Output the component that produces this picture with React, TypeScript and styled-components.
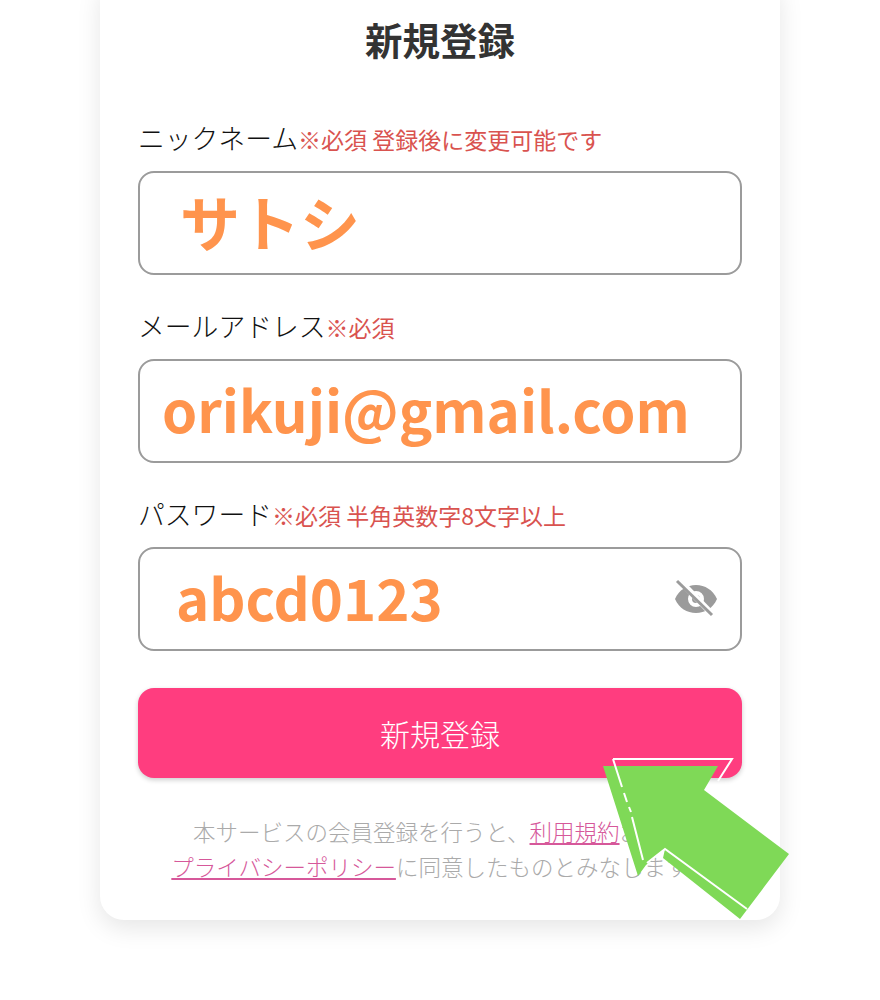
import React from 'react';
import styled, { createGlobalStyle } from 'styled-components';

const FONT = `"Noto Sans CJK JP", "Noto Sans", sans-serif`;

const fields = [
  { label: 'ニックネーム', note: '※必須 登録後に変更可能です', value: 'サトシ', inset: 40, size: 60 },
  { label: 'メールアドレス', note: '※必須', value: 'orikuji@gmail.com', inset: 22, size: 56.3 },
  { label: 'パスワード', note: '※必須 半角英数字8文字以上', value: 'abcd0123', inset: 36, size: 56.3, secret: true }
];

export default function App() {
  return (
    <Page>
      <GlobalStyle />
      <Card>
        <Title>新規登録</Title>
        <Form>
          {fields.map((field) => (
            <Field key={field.label}>
              <Label>
                {field.label}
                <Note>{field.note}</Note>
              </Label>
              <InputBox>
                <Value $inset={field.inset} $size={field.size}>{field.value}</Value>
                {field.secret && <EyeOff />}
              </InputBox>
            </Field>
          ))}
          <Submit type="button">新規登録</Submit>
        </Form>
        <Terms>
          本サービスの会員登録を行うと、<TermsLink>利用規約</TermsLink>および
          <br />
          <TermsLink>プライバシーポリシー</TermsLink>に同意したものとみなします。
        </Terms>
      </Card>
      <Arrow />
    </Page>
  );
}

function EyeOff() {
  return (
    <EyeIcon viewBox="0 0 44 40" aria-hidden="true">
      <path
        fill="#9b9b9b"
        fillRule="evenodd"
        d="M1 20C5 11 13 6 22 6s17 5 21 14c-4 9-12 14-21 14S5 29 1 20Zm21-8a8 8 0 1 0 0 16 8 8 0 0 0 0-16Z"
      />
      <circle cx="22" cy="20" r="4" fill="#9b9b9b" />
      <path stroke="#fff" strokeWidth="6" d="M5 1l36 37" />
      <path stroke="#9b9b9b" strokeWidth="3" d="M3 2l35 34" />
    </EyeIcon>
  );
}

// 資料の説明用に重ねた矢印
function Arrow() {
  return (
    <ArrowIcon viewBox="0 0 880 1000" aria-hidden="true">
      <polygon
        fill="#7fd957"
        points="603,766 718,766 704,790 789,854 740,919 663,858 665,849 646,865 638,876"
      />
      <path
        fill="none"
        stroke="#fff"
        strokeWidth="2"
        d="M613 759H732L718 781M613 759L622 787M624 793L627 802M629 807L631 812M632 817L643 860M647 863L665 849L747 909"
      />
    </ArrowIcon>
  );
}

const GlobalStyle = createGlobalStyle`
  html, body {
    margin: 0;
    background: #fff;
  }
`;

const Page = styled.div`
  position: relative;
  height: 1000px;
  overflow: hidden;
  font-family: ${FONT};
`;

const Card = styled.section`
  box-sizing: border-box;
  width: 680px;
  height: 944px;
  margin: -24px auto 0;
  padding: 36px 38px 0;
  background: #fff;
  border-radius: 24px;
  box-shadow: 0 8px 24px rgba(0, 0, 0, 0.1);
`;

const Title = styled.h1`
  margin: 0 0 50px;
  height: 54px;
  font-size: 37.5px;
  line-height: 54px;
  font-weight: 700;
  text-align: center;
  color: #333;
`;

const Form = styled.div`
  display: flex;
  flex-direction: column;
  gap: 29px;
`;

const Field = styled.div`
  display: flex;
  flex-direction: column;
  gap: 12px;
`;

const Label = styled.div`
  height: 43px;
  font-size: 26.8px;
  font-weight: 300;
  line-height: 43px;
  color: #111;
  white-space: nowrap;
`;

const Note = styled.span`
  font-size: 23px;
  font-weight: 400;
  color: #d9534f;
`;

const InputBox = styled.div`
  box-sizing: border-box;
  display: flex;
  align-items: center;
  justify-content: space-between;
  height: 104px;
  padding-right: 22px;
  border: 2px solid #9b9b9b;
  border-radius: 16px;
`;

const Value = styled.span<{ $inset: number; $size: number }>`
  padding: 0 0 4px ${(props) => props.$inset}px;
  font-size: ${(props) => props.$size}px;
  line-height: 96px;
  font-weight: 700;
  color: #ff944d;
  white-space: nowrap;
`;

const EyeIcon = styled.svg`
  width: 44px;
  height: 40px;
`;

const Submit = styled.button`
  height: 90px;
  margin-top: 8px;
  padding: 0;
  border: 0;
  border-radius: 16px;
  background: #ff3d7f;
  box-shadow: 0 2px 5px rgba(0, 0, 0, 0.2);
  color: #fff;
  font-family: ${FONT};
  font-size: 30px;
  font-weight: 300;
`;

const Terms = styled.p`
  margin: 36px 0 0;
  font-size: 22.5px;
  font-weight: 300;
  line-height: 35px;
  text-align: center;
  color: #aaa;
  white-space: nowrap;
`;

const TermsLink = styled.span`
  color: #d6589a;
  text-decoration: underline;
`;

const ArrowIcon = styled.svg`
  position: absolute;
  top: 0;
  left: 0;
  width: 880px;
  height: 1000px;
`;
